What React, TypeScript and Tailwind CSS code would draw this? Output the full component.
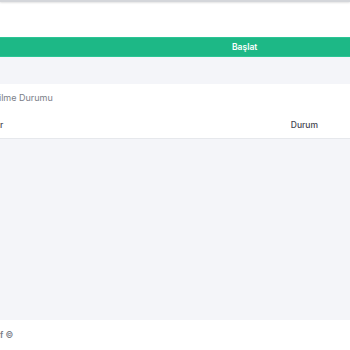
export default function App() {
  return (
    <div className="flex h-[350px] w-[350px] flex-col overflow-hidden bg-[#f4f5f9] font-['Inter',sans-serif]">
      <div className="bg-white">
        <div className="h-[2px] bg-[#d4d6da] shadow-[0_1px_2px_rgba(0,0,0,0.12)]" />
        <div className="h-[35px]" />
        <button className="flex h-[20px] w-full items-center border-y border-[#2bc595] bg-[#1db886] pl-[232px] text-[8.5px] font-semibold text-white">
          Başlat
        </button>
      </div>

      <div className="mt-[27px] border-b border-[#e6e8ec] bg-white">
        <div className="flex h-[28px] items-center text-[9px] text-[#7b8088]">
          <span className="-ml-[1px]">ilme Durumu</span>
        </div>
        <div className="flex h-[26px] items-center justify-between pr-[32px] text-[8.5px] font-medium text-[#3f4450]">
          <span>r</span>
          <span>Durum</span>
        </div>
      </div>

      <div className="flex-1" />

      <footer className="flex h-[30px] items-center bg-white text-[8.5px] font-semibold text-[#7b8088]">
        <span>f ©</span>
      </footer>
    </div>
  );
}
